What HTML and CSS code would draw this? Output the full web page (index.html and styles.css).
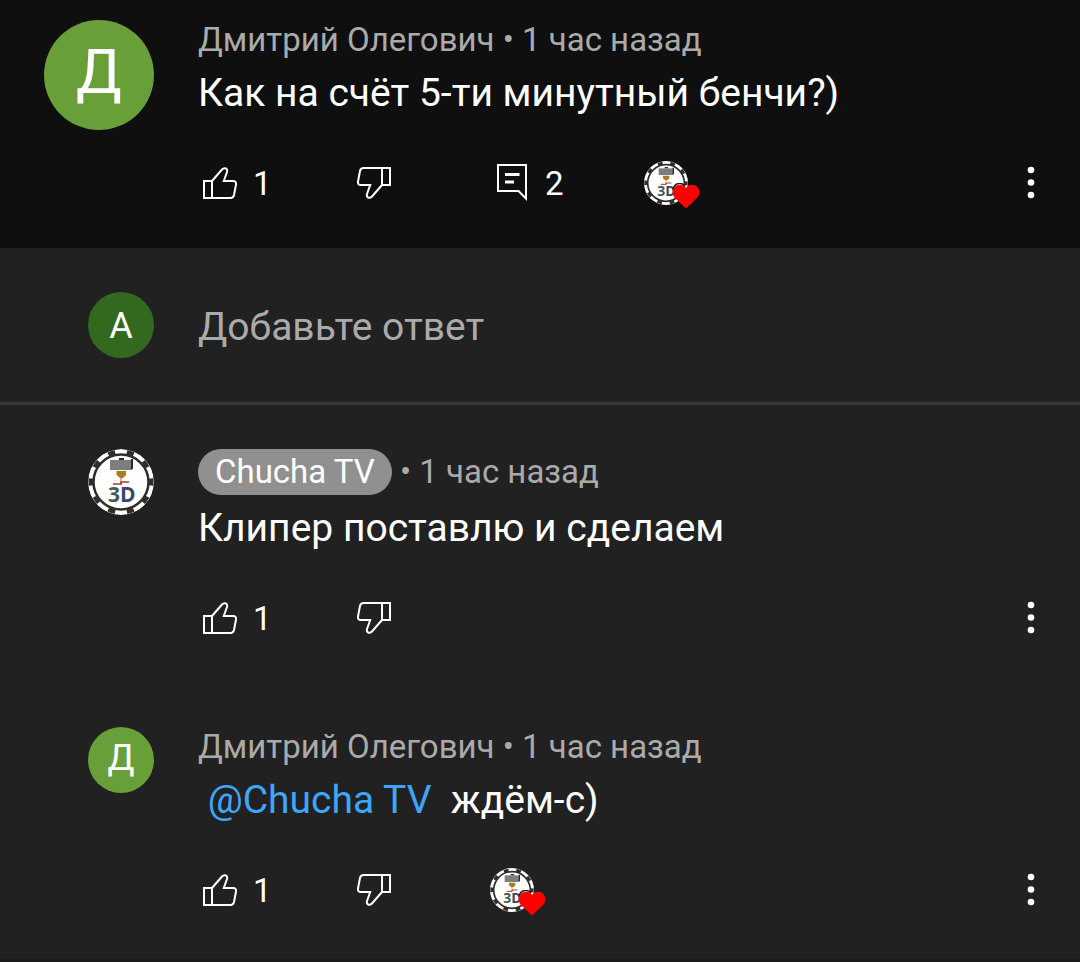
FILE: index.html
```html
<!DOCTYPE html>
<html lang="ru">

<head>
    <meta charset="UTF-8">
    <meta name="viewport" content="width=device-width, initial-scale=1.0">
    <title>Ответы</title>
    <link rel="stylesheet" href="styles.css">
</head>

<body>
    <!-- shared icons -->
    <svg class="sprite" aria-hidden="true">
        <symbol id="icon-like" viewBox="0 0 44 44">
            <path d="M6 20H14V37H6ZM14 20L24 8.500Q26 6.500 28 7.500Q29.700 8.500 29 11L25.800 20H35Q38.500 20 38 23.500L36 34Q35.300 37 32.500 37H14" />
        </symbol>
        <symbol id="icon-comment" viewBox="0 0 44 44">
            <path d="M8 4H36V37.500L28.500 30H8Z" />
            <path class="lines" d="M15 13.500H29.500M15 21H24" />
        </symbol>
        <symbol id="icon-more" viewBox="0 0 10 44">
            <circle cx="5" cy="9" r="3.300" />
            <circle cx="5" cy="21.500" r="3.300" />
            <circle cx="5" cy="34" r="3.300" />
        </symbol>
        <symbol id="icon-heart" viewBox="0 0 28 26">
            <path d="M1 7Q2 0.500 8 0.500Q11 0.500 13 3" fill="none" stroke="#1a1a1a" stroke-width="1.500" />
            <path d="M14 25.500L2.500 14.500C-1 10.500 0.500 3 6.500 2Q11.500 1 14 5Q16.500 1 21.500 2C27.500 3 29 10.500 25.500 14.500Z" />
        </symbol>
        <symbol id="logo" viewBox="0 0 66 66">
            <circle cx="33" cy="33" r="33" fill="#fff" />
            <circle cx="33" cy="33" r="27.500" fill="none" stroke="#332d29" stroke-width="2.500" />
            <circle cx="33" cy="33" r="30" fill="none" stroke="#332d29" stroke-width="5" pathLength="80" stroke-dasharray="3 5" stroke-dashoffset="1.500" />
            <path d="M22 11H44V21H22Z" fill="#7d7f7e" />
            <path d="M31 9H36V11H31ZM43 10H45V20H43Z" fill="#2b2b2b" />
            <path d="M28.500 22H38V26L35 29H32L28.500 26Z" fill="#a87b1e" />
            <path d="M33 29V36" stroke="#a87b1e" stroke-width="1" />
            <path d="M25 35H33V33H41" fill="none" stroke="#a33a35" stroke-width="1.500" />
            <text class="logo-text" x="20" y="53"><tspan fill="#3f5c50">3</tspan><tspan fill="#3a4766">D</tspan></text>
        </symbol>
    </svg>

    <article class="comment main-comment">
        <div class="avatar-col">
            <div class="avatar avatar-large">Д</div>
        </div>
        <div class="content">
            <p class="meta">Дмитрий Олегович • 1 час назад</p>
            <p class="text">Как на счёт 5-ти минутный бенчи?)</p>
            <div class="actions">
                <button class="action like" aria-label="Нравится"><svg class="icon"><use href="#icon-like" /></svg>1</button>
                <button class="action dislike" aria-label="Не нравится"><svg class="icon"><use href="#icon-like" /></svg></button>
                <button class="action replies" aria-label="Ответы"><svg class="icon"><use href="#icon-comment" /></svg>2</button>
                <div class="hearted">
                    <svg class="hearted-logo"><use href="#logo" /></svg>
                    <svg class="heart"><use href="#icon-heart" /></svg>
                </div>
                <button class="more" aria-label="Ещё"><svg class="more-icon"><use href="#icon-more" /></svg></button>
            </div>
        </div>
    </article>

    <form class="reply-form">
        <div class="avatar-col">
            <div class="avatar avatar-own">A</div>
        </div>
        <input class="reply-input" type="text" placeholder="Добавьте ответ" aria-label="Добавьте ответ">
    </form>

    <section class="replies-list">
        <article class="comment">
            <div class="avatar-col">
                <svg class="avatar"><use href="#logo" /></svg>
            </div>
            <div class="content">
                <p class="meta meta-author"><a class="chip" href="#">Chucha TV</a> • 1 час назад</p>
                <p class="text">Клипер поставлю и сделаем</p>
                <div class="actions">
                    <button class="action like" aria-label="Нравится"><svg class="icon"><use href="#icon-like" /></svg>1</button>
                    <button class="action dislike" aria-label="Не нравится"><svg class="icon"><use href="#icon-like" /></svg></button>
                    <button class="more" aria-label="Ещё"><svg class="more-icon"><use href="#icon-more" /></svg></button>
                </div>
            </div>
        </article>

        <article class="comment">
            <div class="avatar-col">
                <div class="avatar">Д</div>
            </div>
            <div class="content">
                <p class="meta">Дмитрий Олегович • 1 час назад</p>
                <p class="text">&nbsp;<a class="mention" href="#">@Chucha TV</a>&nbsp; ждём-с)</p>
                <div class="actions">
                    <button class="action like" aria-label="Нравится"><svg class="icon"><use href="#icon-like" /></svg>1</button>
                    <button class="action dislike" aria-label="Не нравится"><svg class="icon"><use href="#icon-like" /></svg></button>
                    <div class="hearted">
                        <svg class="hearted-logo"><use href="#logo" /></svg>
                        <svg class="heart"><use href="#icon-heart" /></svg>
                    </div>
                    <button class="more" aria-label="Ещё"><svg class="more-icon"><use href="#icon-more" /></svg></button>
                </div>
            </div>
        </article>
    </section>
</body>

</html>
```
FILE: styles.css
```css
* {
    margin: 0;
    padding: 0;
    box-sizing: border-box;
}

body {
    font-family: Roboto, sans-serif;
    background-color: #212121;
    color: #fff;
}

button {
    font: inherit;
    color: inherit;
    background: none;
    border: none;
    cursor: pointer;
}

a {
    color: inherit;
    text-decoration: none;
}

.sprite {
    display: none;
}

.comment {
    display: flex;
    gap: 44px;
    padding: 44px 44px 41px;
}

.main-comment {
    padding-top: 20px;
    background-color: #0f0f0f;
}

.avatar-col {
    display: flex;
    justify-content: flex-end;
    align-items: flex-start;
    width: 110px;
    flex-shrink: 0;
}

.avatar {
    display: flex;
    align-items: center;
    justify-content: center;
    width: 66px;
    height: 66px;
    padding-bottom: 4px;
    border-radius: 50%;
    background-color: #689f38;
    font-size: 36px;
}

svg.avatar {
    padding: 0;
    background: none;
}

.avatar-large {
    width: 110px;
    height: 110px;
    padding-bottom: 6px;
    font-size: 61px;
}

.avatar-own {
    padding: 2px 0 0;
    background-color: #33691e;
}

.content {
    flex: 1;
}

.meta {
    font-size: 33px;
    line-height: 40px;
    color: #aaa;
}

.meta-author {
    line-height: 46px;
}

.chip {
    display: inline-block;
    padding: 0 17px;
    border-radius: 23px;
    background-color: #909090;
    color: #fff;
}

.text {
    margin-top: 7px;
    font-size: 39px;
    line-height: 52px;
}

.mention {
    color: #3ea6ff;
}

.actions {
    display: flex;
    align-items: center;
    height: 48px;
    margin-top: 40px;
    font-size: 33px;
}

.action {
    display: flex;
    align-items: center;
    gap: 11px;
    width: 154px;
}

.dislike {
    width: 138px;
}

.dislike .icon {
    transform: rotate(180deg);
}

.icon {
    width: 44px;
    height: 44px;
    fill: none;
    stroke: #fff;
    stroke-width: 2;
}

.lines {
    stroke-width: 3;
}

.hearted {
    position: relative;
    width: 44px;
    height: 44px;
}

.hearted-logo {
    display: block;
    width: 44px;
    height: 44px;
}

.heart {
    position: absolute;
    right: -12px;
    bottom: -4px;
    width: 28px;
    height: 26px;
    fill: #f00;
}

.logo-text {
    font-family: "Open Sans", sans-serif;
    font-size: 21px;
    font-weight: bold;
}

.more {
    margin-left: auto;
}

.more-icon {
    display: block;
    width: 10px;
    height: 44px;
    fill: #fff;
}

.reply-form {
    display: flex;
    align-items: center;
    gap: 44px;
    padding: 44px;
    border-bottom: 3px solid #383838;
}

.reply-input {
    flex: 1;
    min-width: 0;
    height: 66px;
    padding-top: 4px;
    border: none;
    outline: none;
    background: none;
    color: #fff;
    font: inherit;
    font-size: 39px;
}

.reply-input::placeholder {
    color: #aaa;
}

.replies-list {
    padding-bottom: 4px;
    border-bottom: 3px solid #1a1a1a;
}
```
